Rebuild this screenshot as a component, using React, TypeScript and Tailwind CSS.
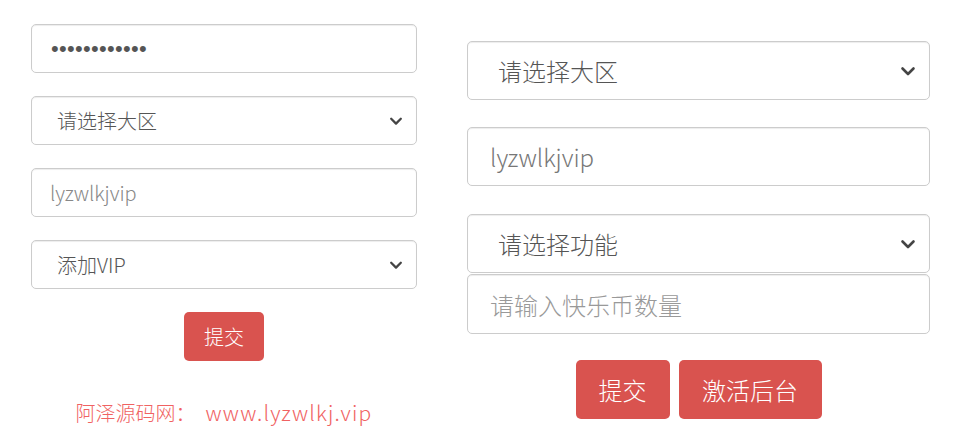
import React from "react";

const font = "font-['Microsoft_YaHei','Noto_Sans_CJK_SC',sans-serif] font-light";

const Chevron = ({ size }: { size: number }) => (
    <svg
        width={size}
        height={size}
        viewBox="0 0 16 16"
        className="pointer-events-none absolute right-[14px] top-1/2 -translate-y-1/2"
    >
        <path d="M2.5 5.5 L8 11 L13.5 5.5" fill="none" stroke="#444" strokeWidth="2.6" strokeLinecap="round" strokeLinejoin="round" />
    </svg>
);

interface SelectProps {
    label: string;
    big?: boolean;
}

const FakeSelect = ({ label, big }: SelectProps) => (
    <div className="relative">
        <select
            defaultValue={label}
            className={`w-full appearance-none bg-white border border-[#ccc] rounded-[5px] text-[#555] shadow-[inset_0_1px_1px_rgba(0,0,0,0.075)] outline-none ${big ? "h-[59px] pl-[30px] text-[24px]" : "h-[49px] pl-[25px] text-[20px]"}`}
        >
            <option>{label}</option>
        </select>
        <Chevron size={big ? 16 : 14} />
    </div>
);

export default function App() {
    return (
        <div className={`w-[953px] h-[446px] bg-white flex ${font}`}>
            {/* left form */}
            <div className="w-[386px] ml-[31px] mt-[24px] flex flex-col gap-[23px]">
                <input
                    type="password"
                    defaultValue="............"
                    className="h-[49px] border border-[#ccc] rounded-[5px] px-[19px] text-[22px] text-[#555] font-['Liberation_Sans',sans-serif] tracking-[0.3px] shadow-[inset_0_1px_1px_rgba(0,0,0,0.075)] outline-none"
                />
                <FakeSelect label="请选择大区" />
                <input
                    placeholder="lyzwlkjvip"
                    className="h-[49px] border border-[#ccc] rounded-[5px] px-[18px] text-[20px] placeholder:text-[#888] shadow-[inset_0_1px_1px_rgba(0,0,0,0.075)] outline-none"
                />
                <FakeSelect label="添加VIP" />
                <div className="flex justify-center">
                    <button className="w-[80px] h-[49px] rounded-[5px] bg-[#d9534f] text-white text-[20px]">提交</button>
                </div>
                <p className="text-center text-[20px] text-[#f06262] leading-none mt-[18px] whitespace-pre">
                    阿泽源码网：<span className="text-[21px] tracking-[1.2px] ml-[10px]">www.lyzwlkj.vip</span>
                </p>
            </div>

            {/* right form */}
            <div className="w-[463px] ml-[50px] mt-[41px] flex flex-col">
                <FakeSelect label="请选择大区" big />
                <input
                    placeholder="lyzwlkjvip"
                    className="mt-[27px] h-[59px] border border-[#ccc] rounded-[5px] px-[22px] text-[24px] placeholder:text-[#777] shadow-[inset_0_1px_1px_rgba(0,0,0,0.075)] outline-none"
                />
                <div className="mt-[28px]">
                    <FakeSelect label="请选择功能" big />
                </div>
                <input
                    placeholder="请输入快乐币数量"
                    className="mt-[1px] h-[60px] border border-[#ccc] rounded-[5px] px-[22px] text-[24px] placeholder:text-[#999] shadow-[inset_0_1px_1px_rgba(0,0,0,0.075)] outline-none"
                />
                <div className="mt-[26px] flex justify-center gap-[9px]">
                    <button className="w-[94px] h-[59px] rounded-[5px] bg-[#d9534f] text-white text-[24px]">提交</button>
                    <button className="w-[143px] h-[59px] rounded-[5px] bg-[#d9534f] text-white text-[24px]">激活后台</button>
                </div>
            </div>
        </div>
    );
}
